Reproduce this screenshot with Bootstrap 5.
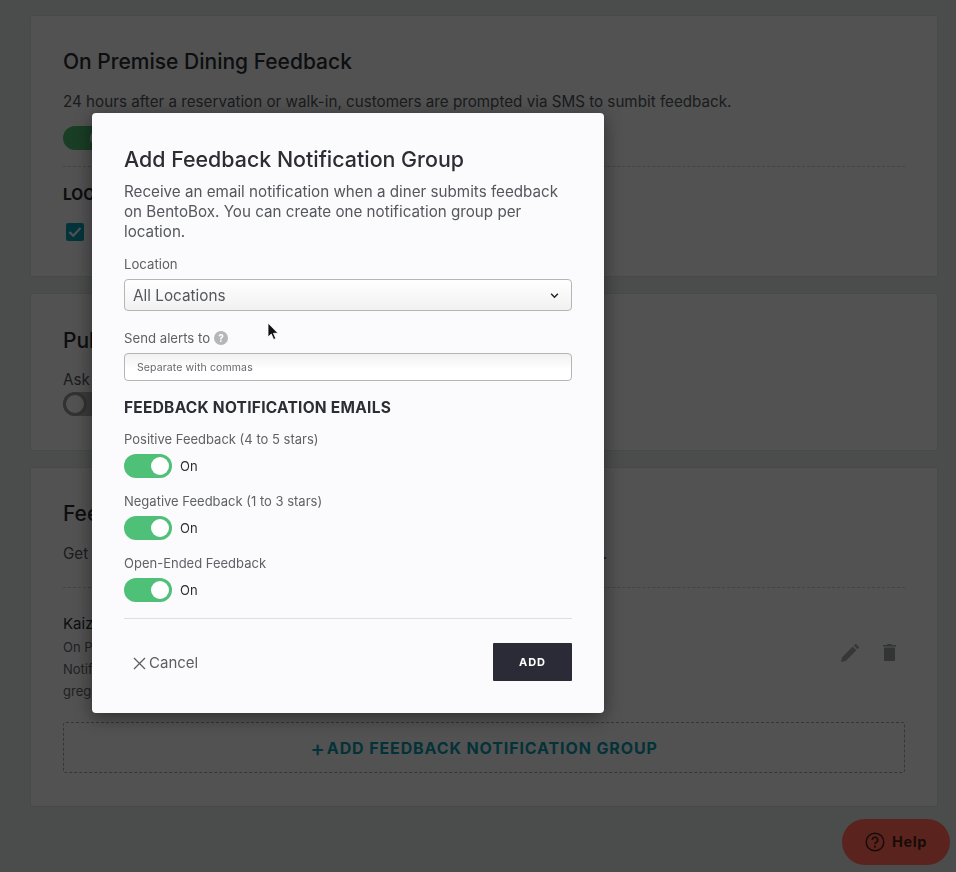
<!DOCTYPE html>
<html lang="en">
<head>
<meta charset="utf-8">
<title>Feedback settings</title>
<link href="https://cdn.jsdelivr.net/npm/bootstrap@5.3.0/dist/css/bootstrap.min.css" rel="stylesheet">
<style>
html,body{height:872px;overflow:hidden}
body{background:#eaebec;font-family:Inter,"Noto Sans",sans-serif;color:#32343a;font-size:14px}
.pg-wrap{padding:15px 18px 0 30px;display:flex;flex-direction:column;gap:16px}
.pg-card{border:1px solid #e2e2e2;border-radius:2px;background:#fff;padding:32px}
.pg-card h2{font-size:21px;font-weight:500;line-height:28px;margin:0;color:#2a2c30}
.pg-card p{font-size:15.2px;line-height:20px;color:#55575c;margin:0}
.pg-c1{height:262px}.pg-c2{height:158px}.pg-c3{height:340px}
.pg-c1 p{margin-top:16px}
.pg-c2 h2{margin-top:1px}
.pg-c2 p{margin-top:15px}
.pg-c3 p{margin-top:16px}
.pg-rule{border-top:1px dashed #d0d0d0;margin:0;opacity:1}
.pg-toggle{width:48px;height:24px;border-radius:12px;background:#4fbf75;margin-top:14px;display:flex;justify-content:flex-end;padding:3px}
.pg-toggle i{width:18px;height:18px;border-radius:50%;background:#fff;display:block}
.pg-off{background:#b4b4b4;justify-content:flex-start;padding:0;margin-top:2px}
.pg-off i{width:24px;height:24px;background:#fff;border:3px solid #9c9c9c}
.pg-caps{font-size:15.5px;font-weight:700;color:#2a2c30;margin:18px 0 0;line-height:20px}
.pg-check{width:18px;height:18px;background:#0fa3b8;border-radius:2px;margin:18px 0 0 3px;display:flex;align-items:center;justify-content:center}
.pg-name{font-size:15px;line-height:20px;color:#2a2c30;margin-bottom:2px}
.pg-sub{font-size:13px;line-height:22px;color:#66686c}
.pg-icons{position:absolute;right:9px;top:56px;gap:24px}
.pg-row{position:relative;padding-top:26px}
.pg-dash{height:51px;border:1px dashed #a4a7a8;border-radius:3px;margin-top:20px;color:#0c9db1;font-weight:700;font-size:16px;letter-spacing:.88px}
.pg-dash span{font-size:22px;font-weight:500;line-height:1;margin-right:1px}
.pg-help{position:absolute;left:842px;top:819px;width:108px;height:46px;border-radius:23px;background:#5b231d;color:#170b09;font-weight:700;font-size:14.5px;letter-spacing:.6px;gap:7px;z-index:6}
.pg-shade{position:fixed;inset:0;background:rgba(0,0,0,.68);z-index:5}
.pg-modal{position:absolute;left:92px;top:113px;width:512px;height:600px;border-radius:4px;background:#fbfbfd;border:0;padding:31px 32px 0;z-index:6;box-shadow:0 4px 18px rgba(0,0,0,.45)}
.pg-modal h1{font-size:21.4px;font-weight:500;line-height:30px;margin:0;color:#2c2e33}
.pg-lead{font-size:15.2px;line-height:20px;color:#55575d;margin:8px 0 0}
.pg-label{font-size:13.2px;line-height:18px;color:#5f6166;margin:0;display:block}
.pg-modal .form-select{height:32px;margin-top:6px;padding:2px 30px 0 8px;font-size:15.3px;color:#55575c;border:1px solid #b5b5b5;border-radius:4px;background-color:#f5f5f5;background-image:url("data:image/svg+xml,%3csvg xmlns='http://www.w3.org/2000/svg' viewBox='0 0 16 16'%3e%3cpath fill='none' stroke='%23222' stroke-width='2.6' d='M2 5l6 6 6-6'/%3e%3c/svg%3e"),linear-gradient(#fff,#f1f1f1);background-repeat:no-repeat;background-position:right 12px center,0 0;background-size:9px 9px,100% 100%;box-shadow:none}
.pg-modal .form-control{height:28px;margin-top:6px;padding:0 12px;font-size:10.5px;letter-spacing:.12px;border:1px solid #b5b5b5;border-radius:4px;background:linear-gradient(#f1f1f1,#fff 60%);color:#555}
.pg-modal .form-control::placeholder{color:#66686c;opacity:1}
.pg-q{width:14px;height:14px;border-radius:50%;background:#b5b6b8;color:#fff;font-size:10px;font-weight:700;line-height:14px;text-align:center;display:inline-block;margin-left:3px}
.pg-h3{font-size:15.5px;font-weight:700;letter-spacing:.25px;line-height:20px;color:#2c2e33;margin:17px 0 0}
.pg-fld{margin-top:12px}
.pg-fld .pg-label{font-size:13px}
.pg-fld .form-switch{padding:0;margin:0;min-height:0;gap:8px;margin-top:6px}
.pg-fld .form-check-input{float:none;margin:0;width:48px;height:24px;border:0;background-color:#4fc078;border-radius:12px}
.pg-fld .form-check-label{font-size:13px;color:#2c2e33;padding-top:2px}
.pg-fld+.pg-fld{margin-top:14px}
.pg-hr{border-top:1px solid #dfdfe1;margin:16px 0 0;opacity:1}
.pg-foot{margin-top:24px}
.pg-cancel{background:none;border:0;padding:2px 0 0 9px;color:#5c5e63;font-size:15px;gap:3px}
.pg-add{width:79px;height:38px;background:#2a2b36;color:#fff;border:0;border-radius:1px;font-size:11px;font-weight:700;letter-spacing:1px}
.pg-cursor{position:absolute;left:267px;top:322px;z-index:7}
</style>
</head>
<body>
<main class="pg-wrap">
  <section class="pg-card pg-c1">
    <h2>On Premise Dining Feedback</h2>
    <p>24 hours after a reservation or walk-in, customers are prompted via SMS to sumbit feedback.</p>
    <div class="pg-toggle"><i></i></div>
    <hr class="pg-rule mt-3">
    <div class="pg-caps">LOCATIONS</div>
    <div class="pg-check"><svg width="14" height="12" viewBox="0 0 14 12"><path d="M1.500 6l3.700 3.700L12.500 2" fill="none" stroke="#fff" stroke-width="2.200"/></svg></div>
  </section>
  <section class="pg-card pg-c2">
    <h2>Public Reviews</h2>
    <p>Ask customers to leave a public review.</p>
    <div class="pg-toggle pg-off"><i></i></div>
  </section>
  <section class="pg-card pg-c3">
    <h2>Feedback Notification Groups</h2>
    <p>Get an email notification every time a guest submits feedback to a manager.</p>
    <hr class="pg-rule" style="margin-top:23px">
    <div class="pg-row">
      <div class="pg-name">Kaizen Group</div>
      <div class="pg-sub">On Premise Dining Feedback</div>
      <div class="pg-sub">Notifications: Positive, Negative</div>
      <div class="pg-sub">greg@bentobox.com</div>
      <div class="pg-icons d-flex align-items-start">
        <svg width="18" height="18" viewBox="0 0 20 20"><path d="M0 20l1.200-5.300L13 2.900 17.100 7 5.300 18.800zM14.300 1.600l1.300-1.300a1 1 0 0 1 1.400 0l2.700 2.700a1 1 0 0 1 0 1.400l-1.300 1.300z" fill="#a9abac"/></svg>
        <svg width="13" height="17" viewBox="0 0 13 17"><path d="M1 3.500h11V16a1 1 0 0 1-1 1H2a1 1 0 0 1-1-1zM0 1h4l.5-1h4l.5 1h4v1.500H0z" fill="#a0a2a3"/></svg>
      </div>
    </div>
    <div class="pg-dash d-flex align-items-center justify-content-center"><span>+</span>ADD FEEDBACK NOTIFICATION GROUP</div>
  </section>
</main>
<div class="pg-help d-flex align-items-center justify-content-center">
  <svg width="20" height="20" viewBox="0 0 20 20"><circle cx="10" cy="10" r="8.800" fill="none" stroke="#170b09" stroke-width="1.500"/><path d="M7.300 8a2.700 2.700 0 1 1 4 2.300c-.9.500-1.300 1-1.300 2" fill="none" stroke="#170b09" stroke-width="1.600"/><circle cx="10" cy="14.700" r="1.100" fill="#170b09"/></svg>
  Help
</div>
<div class="pg-shade"></div>
<form class="pg-modal card">
  <h1>Add Feedback Notification Group</h1>
  <p class="pg-lead">Receive an email notification when a diner submits feedback on BentoBox. You can create one notification group per location.</p>
  <label class="pg-label" style="margin-top:13px" for="loc">Location</label>
  <select id="loc" class="form-select"><option>All Locations</option></select>
  <label class="pg-label d-flex align-items-center" style="margin-top:18px" for="mail">Send alerts to <span class="pg-q ms-1">?</span></label>
  <input id="mail" class="form-control" placeholder="Separate with commas">
  <div class="pg-h3">FEEDBACK NOTIFICATION EMAILS</div>
  <div class="pg-fld">
    <div class="pg-label">Positive Feedback (4 to 5 stars)</div>
    <div class="form-check form-switch d-flex align-items-center"><input class="form-check-input" type="checkbox" role="switch" id="s1" checked><label class="form-check-label" for="s1">On</label></div>
  </div>
  <div class="pg-fld">
    <div class="pg-label">Negative Feedback (1 to 3 stars)</div>
    <div class="form-check form-switch d-flex align-items-center"><input class="form-check-input" type="checkbox" role="switch" id="s2" checked><label class="form-check-label" for="s2">On</label></div>
  </div>
  <div class="pg-fld">
    <div class="pg-label">Open-Ended Feedback</div>
    <div class="form-check form-switch d-flex align-items-center"><input class="form-check-input" type="checkbox" role="switch" id="s3" checked><label class="form-check-label" for="s3">On</label></div>
  </div>
  <hr class="pg-hr">
  <div class="pg-foot d-flex justify-content-between align-items-center">
    <button type="button" class="pg-cancel d-flex align-items-center"><svg width="13" height="13" viewBox="0 0 13 13"><path d="M1 1l11 11M12 1L1 12" stroke="#5c5e63" stroke-width="1.300" fill="none"/></svg>Cancel</button>
    <button type="button" class="pg-add">ADD</button>
  </div>
</form>
<svg class="pg-cursor" width="12" height="19" viewBox="0 0 12 19"><path d="M1 1v14l3.300-3 2.300 5.500 2.200-1-2.300-5.200H11z" fill="#111" stroke="#fff" stroke-width=".8"/></svg>
<script src="https://cdn.jsdelivr.net/npm/bootstrap@5.3.0/dist/js/bootstrap.bundle.min.js"></script>
</body>
</html>
